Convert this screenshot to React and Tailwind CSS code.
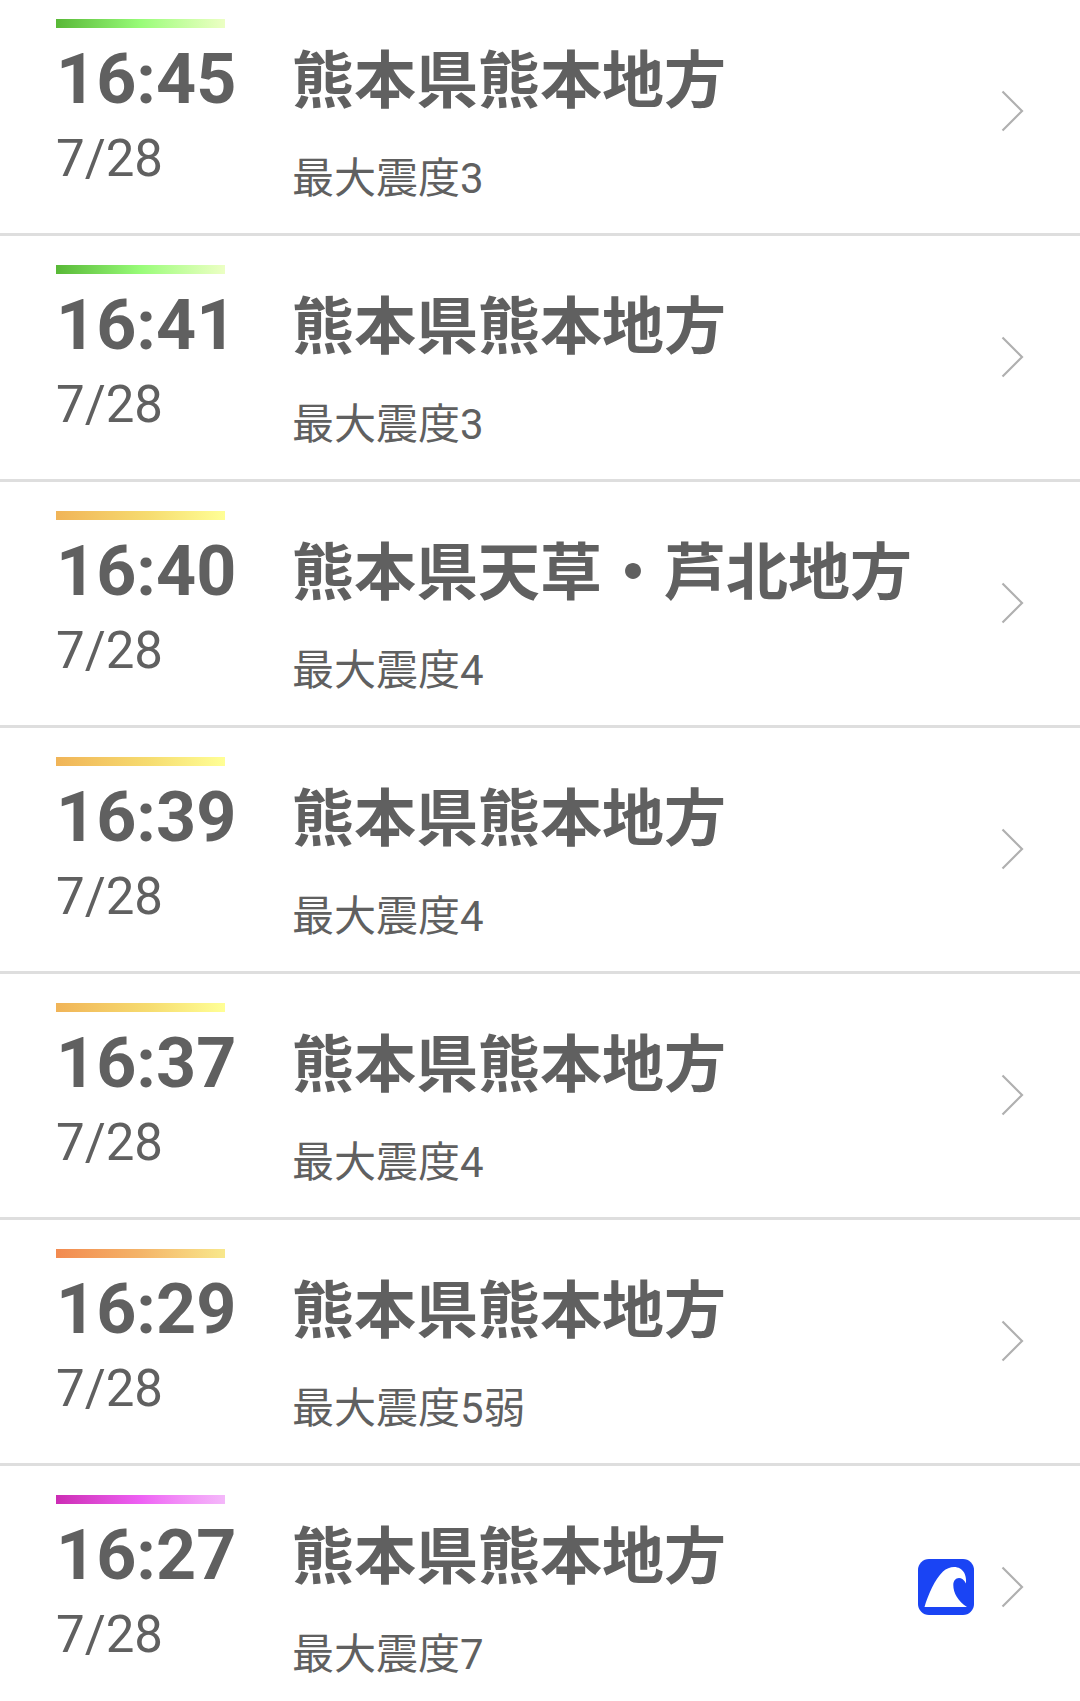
const quakes = [
  { time: "16:45", date: "7/28", area: "熊本県熊本地方", intensity: "3", bar: "from-[#58b836] via-[#98fc78] to-[#ecffc4]" },
  { time: "16:41", date: "7/28", area: "熊本県熊本地方", intensity: "3", bar: "from-[#58b836] via-[#98fc78] to-[#ecffc4]" },
  { time: "16:40", date: "7/28", area: "熊本県天草・芦北地方", intensity: "4", bar: "from-[#f0b458] via-[#f6dc70] via-55% to-[#ffff96]" },
  { time: "16:39", date: "7/28", area: "熊本県熊本地方", intensity: "4", bar: "from-[#f0b458] via-[#f6dc70] via-55% to-[#ffff96]" },
  { time: "16:37", date: "7/28", area: "熊本県熊本地方", intensity: "4", bar: "from-[#f0b458] via-[#f6dc70] via-55% to-[#ffff96]" },
  { time: "16:29", date: "7/28", area: "熊本県熊本地方", intensity: "5弱", bar: "from-[#f28a50] via-[#f4b468] to-[#f8e88c]" },
  { time: "16:27", date: "7/28", area: "熊本県熊本地方", intensity: "7", bar: "from-[#cc2cb4] via-[#ee60f4] to-[#f4b8fa]", tsunami: true },
];

const Chevron = () => (
  <svg viewBox="0 0 24 42" className="h-[42px] w-6 shrink-0" fill="none" stroke="#b0b0b0" strokeWidth="2.2" aria-hidden="true">
    <path d="M2.5 1.5 22 21 2.5 40.5" />
  </svg>
);

const TsunamiBadge = () => (
  <svg viewBox="0 0 56 56" className="mr-[26px] size-14 shrink-0" role="img" aria-label="津波">
    <rect width="56" height="56" rx="11" fill="#1a44f4" />
    <path d="M6.5 48C10 36 17 20 25 12.500C30 8 37 6.500 42 9.500C47 12.500 48.500 18 48 24.500C46 20.500 43.500 19 41 19C37.500 19 35.300 22 35.300 26C35.300 34 40 42 49 48Z" fill="#fff" />
  </svg>
);

const QuakeRow = ({ quake }) => (
  <li className="group border-b-3 border-[#dedede] last:border-b-0">
    <a href="#detail" className="flex items-start px-14 pt-[29px] pb-[22px] group-first:pt-[19px] group-last:pb-[14px]">
      <div className="w-[236px] shrink-0">
        <div className={`h-[9px] w-[169px] bg-linear-to-r ${quake.bar}`} />
        <p className="mt-[11px] text-[70px] leading-[80px] font-bold">{quake.time}</p>
        <p className="text-[51px] leading-[80px]">{quake.date}</p>
      </div>
      <div className="min-w-0 flex-1 pt-[18px]">
        <h2 className="text-[62px] leading-[90px] font-bold whitespace-nowrap">{quake.area}</h2>
        <p className="mt-5 text-[42px] leading-[64px]">最大震度{quake.intensity}</p>
      </div>
      <div className="flex h-[184px] items-center">
        {quake.tsunami && <TsunamiBadge />}
        <Chevron />
      </div>
    </a>
  </li>
);

const App = () => (
  <main className="bg-white font-[Roboto,'Noto_Sans_CJK_JP',sans-serif] text-[#606060]">
    <ul>
      {quakes.map((quake) => (
        <QuakeRow key={quake.time} quake={quake} />
      ))}
    </ul>
  </main>
);

export default App;
